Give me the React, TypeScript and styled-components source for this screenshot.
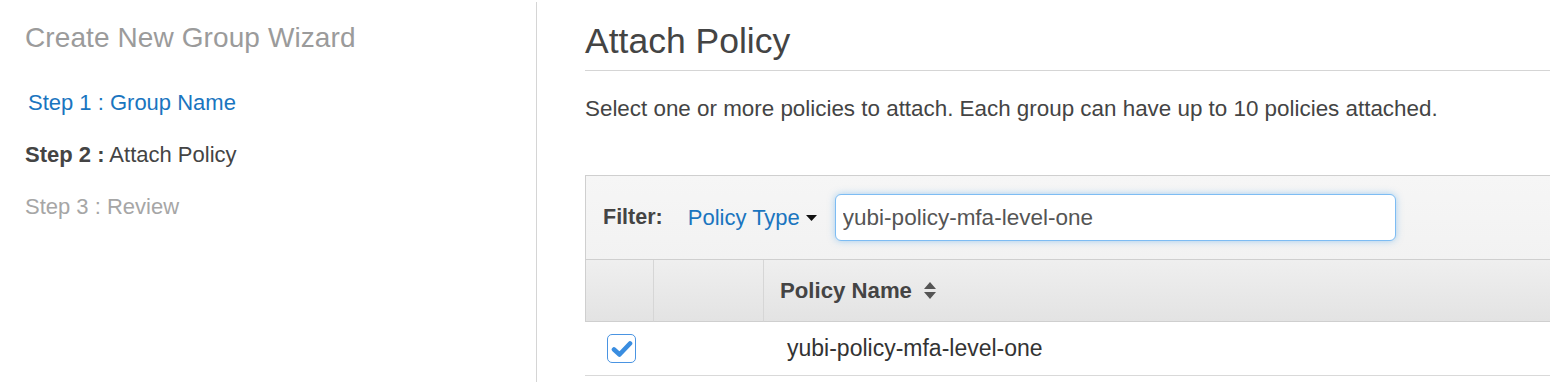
import React from "react";
import styled, { createGlobalStyle } from "styled-components";

const GlobalStyle = createGlobalStyle`
	html, body {
		margin: 0;
		padding: 0;
		background: #fff;
		overflow: hidden;
	}
	body {
		font-family: "Liberation Sans", Arial, Helvetica, sans-serif;
		color: #444;
	}
`;

const Page = styled.div`
	display: flex;
	width: 1550px;
	height: 382px;
	overflow: hidden;
`;

const Sidebar = styled.aside`
	flex: 0 0 537px;
	border-right: 1px solid #d5d5d5;
	margin-top: 2px;
	padding: 20px 0 0 25px;
	box-sizing: border-box;
`;

const WizardTitle = styled.h2`
	margin: 0;
	font-size: 28px;
	font-weight: normal;
	line-height: 32px;
	color: #9b9b9b;
	letter-spacing: 0.1px;
`;

const Steps = styled.ul`
	list-style: none;
	margin: 37px 0 0;
	padding: 0;
	display: flex;
	flex-direction: column;
	gap: 28px;
`;

const Step = styled.li<{ $state: "done" | "current" | "todo" }>`
	font-size: 22px;
	line-height: 24px;
	padding-left: ${(p) => (p.$state === "done" ? "3px" : "0")};
	color: ${(p) =>
		p.$state === "done" ? "#1a75bf" : p.$state === "current" ? "#444" : "#a6a6a6"};
	b {
		font-weight: bold;
	}
`;

const Main = styled.main`
	flex: 0 0 1060px;
	padding: 22px 0 0 48px;
	box-sizing: border-box;
`;

const Heading = styled.h1`
	margin: 0;
	padding-bottom: 10px;
	font-size: 35.5px;
	font-weight: normal;
	line-height: 38px;
	color: #444;
	border-bottom: 1px solid #d5d5d5;
`;

const Intro = styled.p`
	margin: 26px 0 0;
	font-size: 22.4px;
	line-height: 24px;
	color: #444;
`;

const Table = styled.div`
	margin-top: 54px;
`;

const FilterBar = styled.div`
	display: flex;
	align-items: center;
	height: 83px;
	padding-left: 17px;
	background: linear-gradient(#f6f6f6, #f2f2f2);
	border: 1px solid #cfcfcf;
	border-right: none;
`;

const FilterLabel = styled.span`
	font-size: 21.5px;
	font-weight: bold;
	color: #444;
`;

const TypeMenu = styled.span`
	display: inline-flex;
	align-items: center;
	gap: 6px;
	margin-left: 25px;
	font-size: 22px;
	color: #1a75bf;
`;

const SearchInput = styled.input`
	margin-left: 18px;
	width: 561px;
	height: 47px;
	box-sizing: border-box;
	padding: 0 7px;
	border: 1px solid #7dbcf3;
	border-radius: 6px;
	box-shadow: 0 0 7px rgba(82, 168, 236, 0.5);
	font-family: inherit;
	font-size: 22.5px;
	color: #555;
	outline: none;
`;

const Grid = styled.div`
	display: grid;
	grid-template-columns: 69px 110px 1fr;
`;

const HeadCell = styled.div<{ $first?: boolean; $last?: boolean }>`
	height: 61px;
	display: flex;
	align-items: center;
	gap: 11px;
	padding-left: ${(p) => (p.$last ? "16px" : "0")};
	background: linear-gradient(#efefef, #e3e3e3);
	border-left: ${(p) => (p.$first ? "1px solid #cfcfcf" : "none")};
	border-right: ${(p) => (p.$last ? "none" : "1px solid #d6d6d6")};
	border-bottom: 1px solid #cfcfcf;
	font-size: 22.2px;
	font-weight: bold;
	color: #444;
`;

const Cell = styled.div<{ $pad?: number; $center?: boolean }>`
	height: 53px;
	display: flex;
	align-items: center;
	justify-content: ${(p) => (p.$center ? "center" : "flex-start")};
	padding-left: ${(p) => p.$pad ?? 0}px;
	font-size: 23px;
	color: #333;
	background: #fff;
	border-bottom: 1px solid #d9d9d9;
`;

const CheckBox = styled.span`
	width: 29px;
	height: 29px;
	box-sizing: border-box;
	margin-left: 4px;
	border: 1.5px solid #4a94e2;
	border-radius: 5px;
	display: flex;
	align-items: center;
	justify-content: center;
	background: #fff;
`;

const Caret = () => (
	<svg width="11" height="6" viewBox="0 0 11 6">
		<path d="M0 0h11L5.5 6z" fill="#111" />
	</svg>
);

const SortIcon = () => (
	<svg width="14" height="19" viewBox="0 0 14 19">
		<path d="M7 1L13 8H1z M7 18L13 11H1z" fill="#555" />
	</svg>
);

const Check = () => (
	<svg width="22" height="18" viewBox="0 0 22 18">
		<path
			d="M3 9.5L8.5 14.5L19 3.5"
			fill="none"
			stroke="#3a8de0"
			strokeWidth="4.6"
			strokeLinecap="round"
			strokeLinejoin="round"
		/>
	</svg>
);

const App: React.FC = () => {
	return (
		<>
			<GlobalStyle />
			<Page>
				<Sidebar>
					<WizardTitle>Create New Group Wizard</WizardTitle>
					<Steps>
						<Step $state="done">Step 1 : Group Name</Step>
						<Step $state="current">
							<b>Step 2 :</b> Attach Policy
						</Step>
						<Step $state="todo">Step 3 : Review</Step>
					</Steps>
				</Sidebar>
				<Main>
					<Heading>Attach Policy</Heading>
					<Intro>
						Select one or more policies to attach. Each group can have up to 10
						policies attached.
					</Intro>
					<Table>
						<FilterBar>
							<FilterLabel>Filter:</FilterLabel>
							<TypeMenu>
								Policy Type
								<Caret />
							</TypeMenu>
							<SearchInput readOnly value="yubi-policy-mfa-level-one" />
						</FilterBar>
						<Grid>
							<HeadCell $first />
							<HeadCell />
							<HeadCell $last>
								Policy Name
								<SortIcon />
							</HeadCell>
							<Cell $center>
								<CheckBox>
									<Check />
								</CheckBox>
							</Cell>
							<Cell />
							<Cell $pad={23}>yubi-policy-mfa-level-one</Cell>
						</Grid>
					</Table>
				</Main>
			</Page>
		</>
	);
};

export default App;
